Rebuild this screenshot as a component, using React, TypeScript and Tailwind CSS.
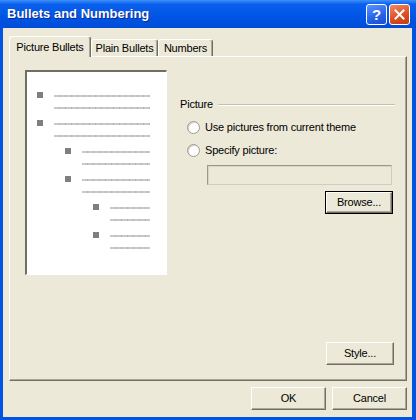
import type { ReactNode } from "react"

const font = "font-['Liberation_Sans',Arial,sans-serif]"

function Btn({ children, className = "", isDefault = false }: { children: ReactNode; className?: string; isDefault?: boolean }) {
    const face = (
        <div className="flex h-full w-full items-center justify-center border border-t-white border-l-white border-r-[#716f64] border-b-[#716f64] bg-[#ece9d8] text-[11px] text-black shadow-[inset_-1px_-1px_#aca899]">
            {children}
        </div>
    )
    if (isDefault) {
        return <div className={`border border-black ${className}`}>{face}</div>
    }
    return <div className={className}>{face}</div>
}

function Radio({ label }: { label: string }) {
    return (
        <div className="flex h-[13px] items-center ml-[7px]">
            <div className="h-[13px] w-[13px] rounded-full border border-[#9d9b90] bg-white shadow-[inset_1px_1px_#d5d3c8]" />
            <span className="ml-[5px] text-[11px] leading-[13px] text-black">{label}</span>
        </div>
    )
}

function Line() {
    return <div className="h-[2px] bg-[repeating-linear-gradient(90deg,#c9c9c9_0_5px,#b9b6a6_5px_6px)]" />
}

function BulletItem({ level }: { level: number }) {
    const pad = level === 1 ? "pl-[10px]" : level === 2 ? "pl-[38px]" : "pl-[66px]"
    return (
        <div className={`flex h-[28px] ${pad}`}>
            <div className="h-[6px] w-[6px] bg-[#7f7f7f]" />
            <div className="ml-[11px] flex flex-1 flex-col pt-[3px]">
                <Line />
                <div className="mt-[10px]">
                    <Line />
                </div>
            </div>
        </div>
    )
}

export default function App() {
    return (
        <div className={`flex h-[420px] w-[416px] flex-col bg-[#0054e3] tracking-[-0.2px] ${font}`}>
            {/* title bar */}
            <div className="flex h-[28px] items-center justify-between bg-[linear-gradient(180deg,#3d91fb_0%,#0a60ec_15%,#0055e5_60%,#004cd9_100%)] pl-[7px] pr-[6px]">
                <span className="text-[13px] font-bold tracking-normal text-white [text-shadow:1px_1px_#0b2a8a]">Bullets and Numbering</span>
                <div className="flex gap-[2px]">
                    <div className="flex h-[21px] w-[21px] items-center justify-center rounded-[3px] border border-white bg-[linear-gradient(160deg,#5d93ff,#2562e8_60%,#1b4fd0)] text-[15px] font-bold leading-none text-white">
                        ?
                    </div>
                    <div className="flex h-[21px] w-[21px] items-center justify-center rounded-[3px] border border-white bg-[linear-gradient(160deg,#f08a65,#de4b22_60%,#c53a13)]">
                        <svg width="11" height="11" viewBox="0 0 11 11">
                            <path d="M1.5 1.5L9.5 9.5M9.5 1.5L1.5 9.5" stroke="white" strokeWidth="2" strokeLinecap="square" />
                        </svg>
                    </div>
                </div>
            </div>

            {/* body */}
            <div className="ml-[3px] mr-[4px] mb-[3px] flex flex-1 flex-col bg-[#ece9d8] pt-[8px] pr-[5px] pl-[6px] pb-[7px]">
                {/* tabs */}
                <div className="flex h-[20px] items-end">
                    <div className="relative z-10 -mb-px flex h-[21px] w-[82px] items-center justify-center rounded-t-[3px] border border-b-0 border-t-white border-l-white border-r-[#716f64] bg-[#ece9d8] text-[11px] text-black shadow-[inset_-1px_0_#aca899]">
                        Picture Bullets
                    </div>
                    <div className="flex h-[17px] w-[67px] items-center justify-center rounded-t-[3px] border border-b-0 border-t-white border-l-white border-r-[#716f64] bg-[#ece9d8] text-[11px] text-black shadow-[inset_-1px_0_#aca899]">
                        Plain Bullets
                    </div>
                    <div className="flex h-[17px] w-[55px] items-center justify-center rounded-t-[3px] border border-b-0 border-t-white border-l-white border-r-[#716f64] bg-[#ece9d8] text-[11px] text-black shadow-[inset_-1px_0_#aca899]">
                        Numbers
                    </div>
                </div>

                {/* panel */}
                <div className="flex h-[325px] flex-col border border-t-white border-l-white border-r-[#716f64] border-b-[#716f64] shadow-[inset_-1px_-1px_#aca899]">
                    <div className="flex">
                        {/* preview */}
                        <div className="ml-[15px] mt-[13px] h-[205px] w-[142px] border-t-2 border-l-2 border-r border-b border-t-[#716f64] border-l-[#716f64] border-r-white border-b-white bg-white pt-[20px] pr-[16px]">
                            <BulletItem level={1} />
                            <BulletItem level={1} />
                            <BulletItem level={2} />
                            <BulletItem level={2} />
                            <BulletItem level={3} />
                            <BulletItem level={3} />
                        </div>

                        {/* options */}
                        <div className="ml-[13px] mt-[41px] flex w-[215px] flex-col">
                            <div className="flex h-[13px] items-center">
                                <span className="text-[11px] leading-[13px] text-black">Picture</span>
                                <div className="ml-[5px] h-0 flex-1 border-t border-b border-t-[#c3c0b0] border-b-white" />
                            </div>
                            <div className="mt-[10px]">
                                <Radio label="Use pictures from current theme" />
                            </div>
                            <div className="mt-[10px]">
                                <Radio label="Specify picture:" />
                            </div>
                            <div className="ml-[27px] mt-[8px] h-[20px] w-[185px] border border-t-[#9a988c] border-l-[#9a988c] border-r-[#cfcdc2] border-b-[#cfcdc2] bg-[#ece9d8] shadow-[inset_1px_1px_#d8d5c8]" />
                            <Btn isDefault className="ml-[145px] mt-[6px] h-[23px] w-[68px]">
                                Browse...
                            </Btn>
                        </div>
                    </div>

                    <div className="mt-auto mb-[15px] mr-[12px] self-end">
                        <Btn className="h-[23px] w-[68px]">Style...</Btn>
                    </div>
                </div>

                {/* footer */}
                <div className="mt-[6px] flex justify-end gap-[6px]">
                    <Btn className="h-[23px] w-[75px]">OK</Btn>
                    <Btn className="h-[23px] w-[75px]">Cancel</Btn>
                </div>
            </div>
        </div>
    )
}
